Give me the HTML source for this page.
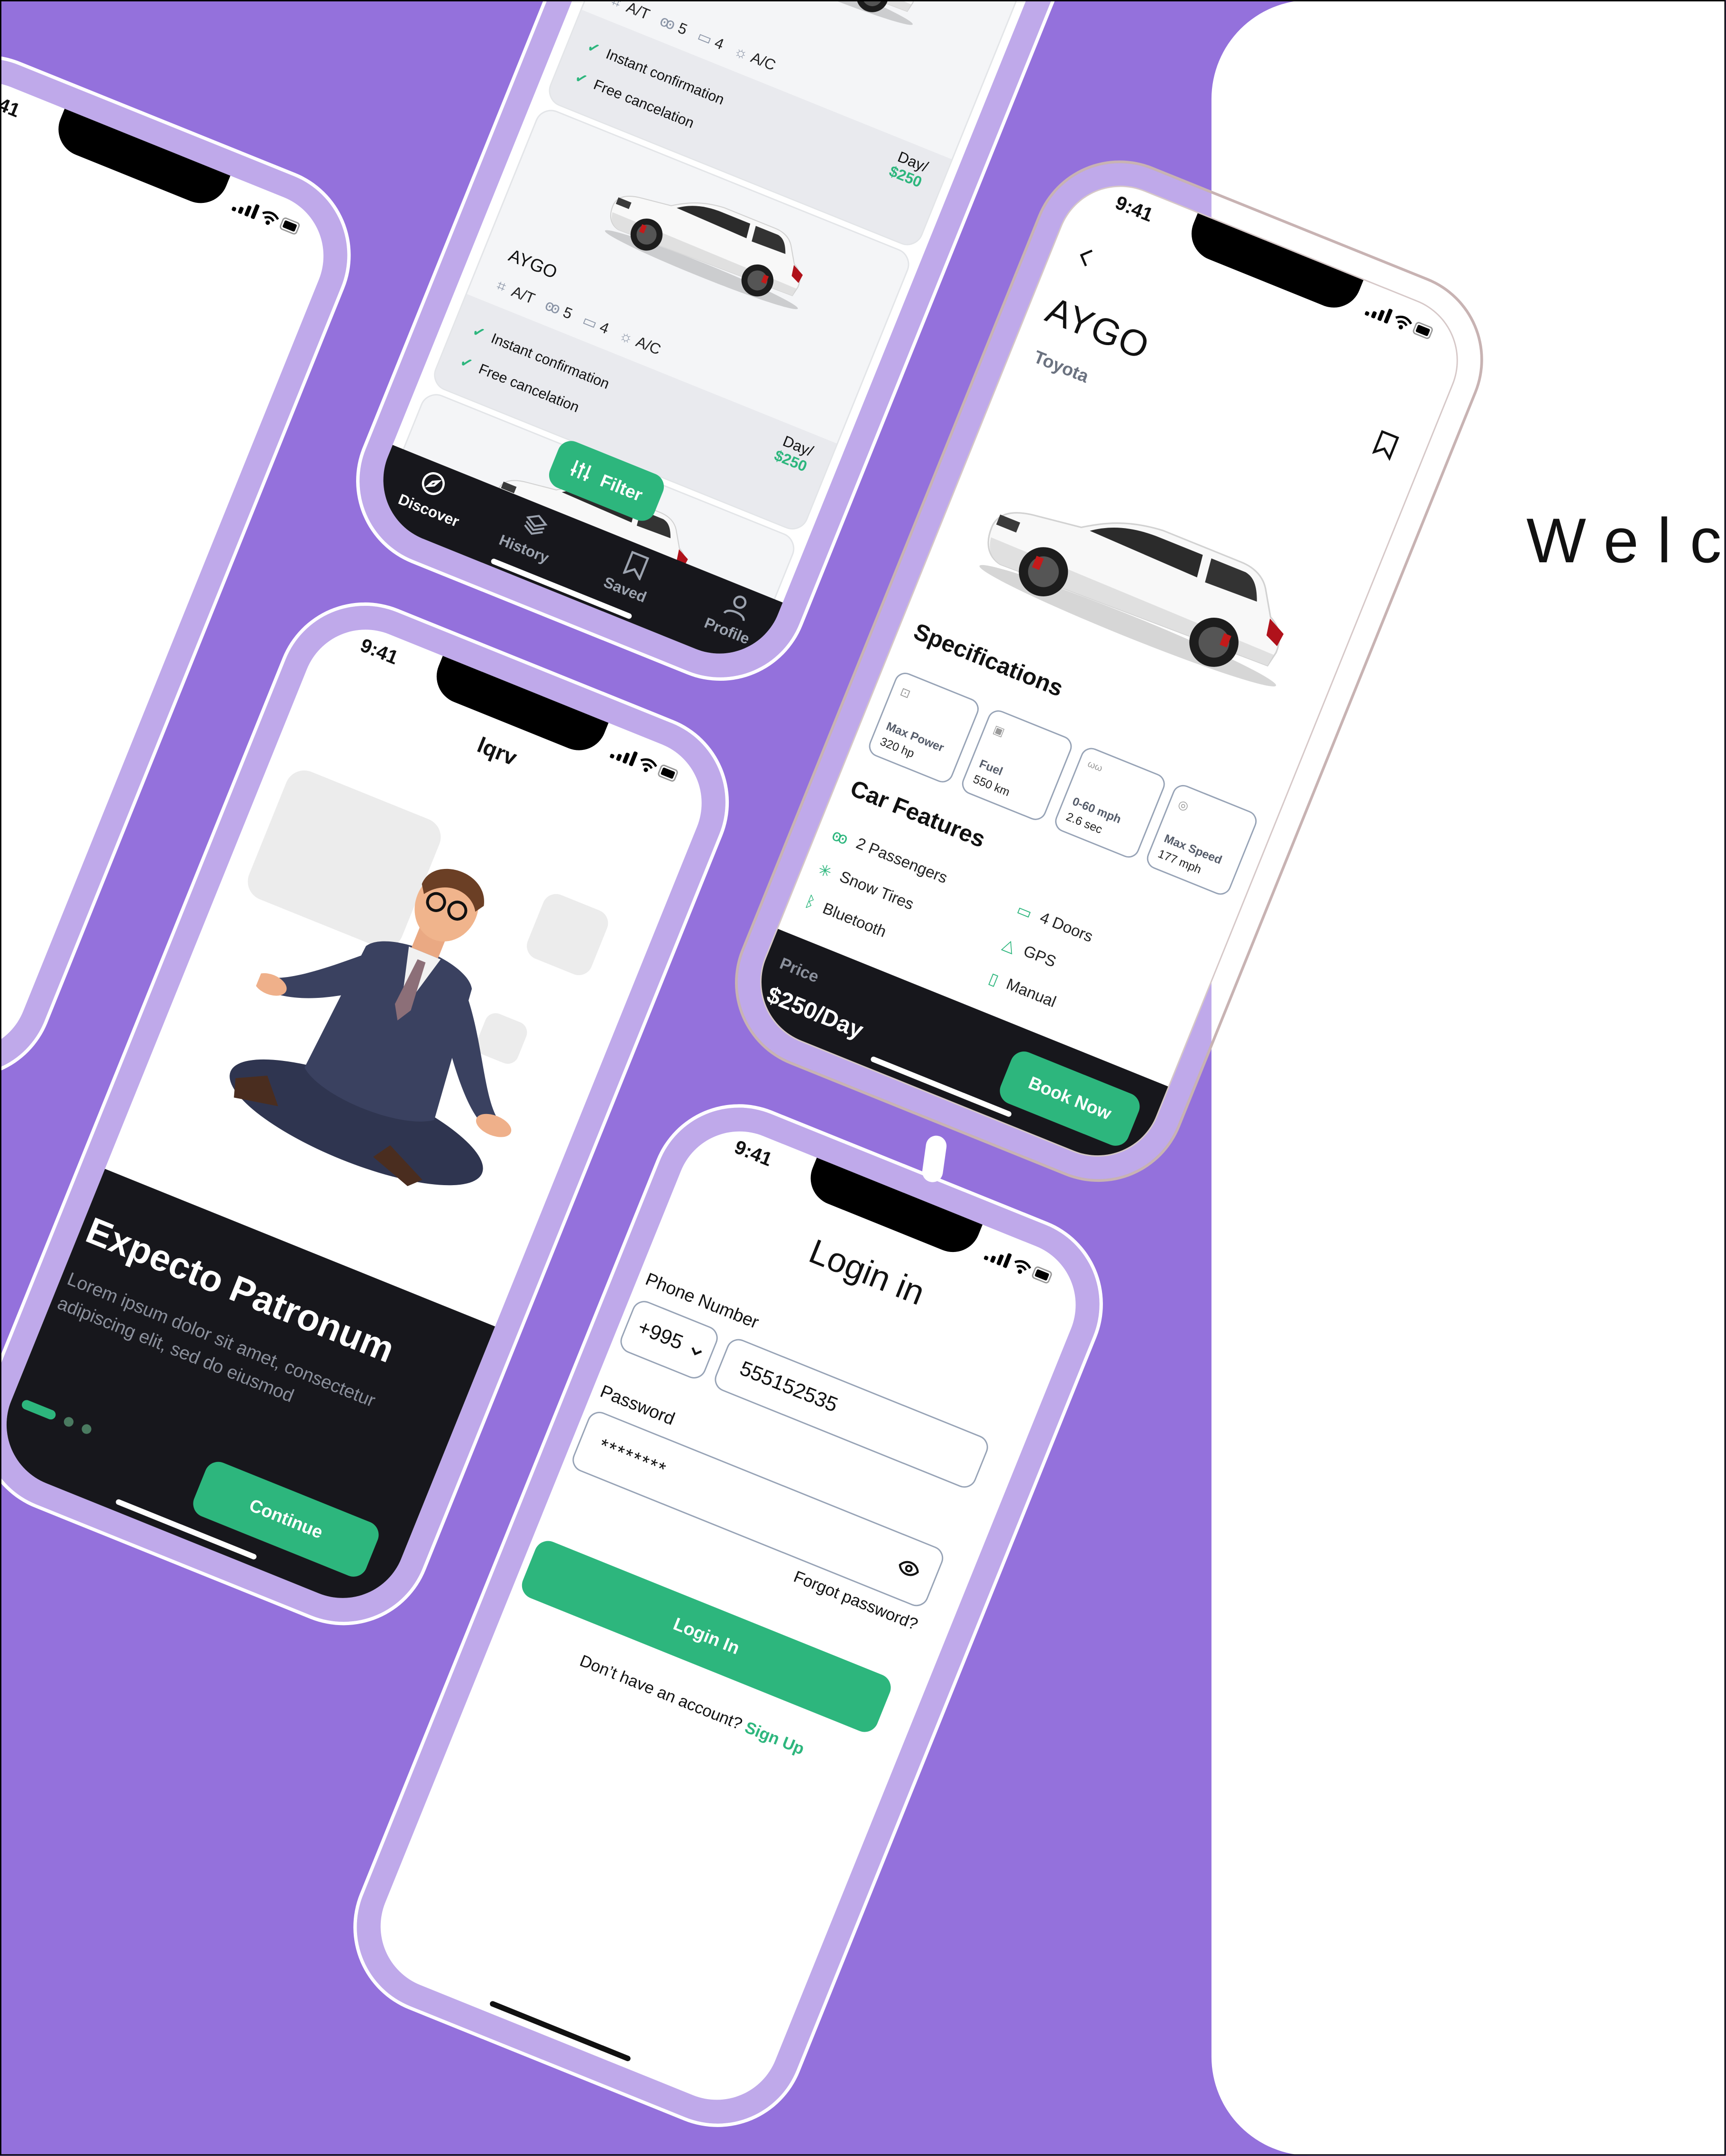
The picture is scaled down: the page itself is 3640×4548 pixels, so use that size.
<!DOCTYPE html>
<html><head><meta charset="utf-8">
<style>
html,body{margin:0;padding:0}
body{width:3640px;height:4548px;overflow:hidden;background:#9471dc;position:relative}
#s{position:absolute;left:0;top:0;width:1255px;height:1568px;transform:scale(2.9);transform-origin:0 0;overflow:hidden;background:#9471dc;font-family:"Liberation Sans",sans-serif;color:#111}
#bd{position:absolute;left:0;top:0;right:0;bottom:0;border:1.3px solid #000;z-index:50;pointer-events:none}
.panel{position:absolute;left:881px;top:0;width:420px;height:1568px;background:#fff;border-radius:72px 0 0 72px}
.welc{position:absolute;left:1110px;top:366px;font-size:46px;letter-spacing:13.5px;white-space:nowrap;color:#111}
.ph{position:absolute;left:0;top:0;width:340px;height:700px;transform-origin:0 0;border-radius:62px;background:rgba(255,255,255,.4);box-shadow:0 0 0 2.5px #fff}
.sc{position:absolute;left:17px;top:17px;width:306px;height:666px;border-radius:46px;background:#fff;overflow:hidden}
.a{position:absolute;white-space:nowrap}
.notch{position:absolute;left:88px;top:-2px;width:130px;height:30px;background:#000;border-radius:0 0 20px 20px}
.time{position:absolute;left:30px;top:6px;font-size:14px;font-weight:700}
.st{position:absolute;left:228px;top:12px}
.hi{position:absolute;left:98px;top:657px;width:110px;height:4px;border-radius:2px;background:#fff}
.green{background:#2db67d;color:#fff}
.card{position:absolute;left:8px;width:290px;height:217px;border-radius:12px;background:#f4f5f7;border:1px solid #e3e5e8;overflow:hidden}
.card .low{position:absolute;left:0;right:0;top:147px;bottom:0;background:#e9eaee}
.spec{position:absolute;top:389px;width:63px;height:63px;border:1.5px solid #97a3b6;border-radius:8px;font-size:8.5px}
.spec b{position:absolute;left:6px;top:35px;color:#555c6a;font-weight:700}
.spec i{position:absolute;left:6px;top:47px;font-style:normal;color:#222}
.feat{position:absolute;font-size:11.5px;color:#222;display:flex;align-items:center;gap:7px}
.box{position:absolute;border:1.5px solid #97a3b6;border-radius:9px}
</style></head><body>
<div id="s">
<svg width="0" height="0" style="position:absolute">
<defs>
<symbol id="car" viewBox="0 0 220 100">
<ellipse cx="112" cy="86" rx="104" ry="7" fill="rgba(0,0,0,.16)"/>
<path d="M6,60 C6,50 14,44 30,42 L60,38 C72,30 86,22 110,20 L165,20 C175,20 182,24 186,30 L196,46 C204,50 208,56 208,66 L206,76 L20,80 C10,78 6,70 6,60Z" fill="#f8f8f8" stroke="#d2d2d2" stroke-width="1"/>
<path d="M8,66 L207,68 L206,76 L20,80 C12,78 9,73 8,66Z" fill="#e0e0e0"/>
<path d="M66,38 C78,29 92,25 110,25 L140,25 L142,40 Z" fill="#2b2b2b"/>
<path d="M146,25 L170,25 C176,26 180,30 184,40 L148,41 Z" fill="#333"/>
<path d="M196,47 L208,53 L207,62 L198,58 Z" fill="#b0121b"/>
<rect x="8" y="50" width="14" height="7" fill="#3a3a3a"/>
<circle cx="48" cy="74" r="16" fill="#1d1d1d"/><circle cx="48" cy="74" r="10" fill="#555"/><rect x="40" y="66" width="5" height="8" fill="#c41a1a"/>
<circle cx="168" cy="75" r="16" fill="#1d1d1d"/><circle cx="168" cy="75" r="10" fill="#555"/><rect x="172" y="67" width="5" height="8" fill="#c41a1a"/>
</symbol>
<symbol id="stat" viewBox="0 0 52 12">
<rect x="0" y="8" width="3" height="3" rx="1"/><rect x="5" y="6" width="3" height="5" rx="1"/><rect x="10" y="3" width="3" height="8" rx="1"/><rect x="15" y="0" width="3" height="11" rx="1"/>
<path d="M22 4.5 Q28 -0.5 34 4.5 M24.5 7 Q28 4 31.5 7" stroke="#000" stroke-width="1.7" fill="none"/><circle cx="28" cy="9.5" r="1.6"/>
<rect x="37.5" y="1.5" width="12.5" height="8.5" rx="2" fill="none" stroke="#999"/><rect x="39" y="3" width="9.5" height="5.5" rx="1"/>
</symbol>
</defs>
</svg>

<div class="panel"></div>
<div class="welc">Welcome</div>

<!-- LEFT PHONE -->
<div class="ph" style="transform:translate(-44px,24px) rotate(22deg)">
<div class="sc"><div class="notch"></div><div class="time">9:41</div><svg class="st" width="52" height="12"><use href="#stat"/></svg></div>
</div>

<!-- LIST PHONE -->
<div class="ph" style="transform:translate(505px,-265px) rotate(22deg)">
<div class="sc" style="background:#fff">
<div class="card" style="top:118px"><div class="low"></div>
<svg class="a" style="left:70px;top:4px" width="160" height="73"><use href="#car"/></svg>
<div class="a" style="left:18px;top:101px;font-size:13px">AYGO</div>
<div class="a" style="left:18px;top:126px;font-size:11px;color:#222"><span style="color:#8a94a6">⌗</span>&nbsp; A/T &nbsp;&nbsp;<span style="color:#8a94a6">ꙭ</span> 5 &nbsp;&nbsp;<span style="color:#8a94a6">▭</span> 4 &nbsp;&nbsp;<span style="color:#8a94a6">☼</span> A/C</div>
<div class="a" style="left:14px;top:164px;font-size:10.5px"><span style="color:#2db67d;font-weight:700">✓</span>&nbsp; Instant confirmation</div>
<div class="a" style="left:14px;top:188px;font-size:10.5px"><span style="color:#2db67d;font-weight:700">✓</span>&nbsp; Free cancelation</div>
<div class="a" style="right:14px;top:154px;font-size:11px;text-align:right">Day/<br><span style="color:#2db67d;font-weight:700">$250</span></div>
</div>
<div class="card" style="top:341px"><div class="low"></div>
<svg class="a" style="left:70px;top:4px" width="160" height="73"><use href="#car"/></svg>
<div class="a" style="left:18px;top:101px;font-size:13px">AYGO</div>
<div class="a" style="left:18px;top:126px;font-size:11px;color:#222"><span style="color:#8a94a6">⌗</span>&nbsp; A/T &nbsp;&nbsp;<span style="color:#8a94a6">ꙭ</span> 5 &nbsp;&nbsp;<span style="color:#8a94a6">▭</span> 4 &nbsp;&nbsp;<span style="color:#8a94a6">☼</span> A/C</div>
<div class="a" style="left:14px;top:164px;font-size:10.5px"><span style="color:#2db67d;font-weight:700">✓</span>&nbsp; Instant confirmation</div>
<div class="a" style="left:14px;top:188px;font-size:10.5px"><span style="color:#2db67d;font-weight:700">✓</span>&nbsp; Free cancelation</div>
<div class="a" style="right:14px;top:154px;font-size:11px;text-align:right">Day/<br><span style="color:#2db67d;font-weight:700">$250</span></div>
</div>
<div class="card" style="top:564px">
<svg class="a" style="left:70px;top:4px" width="160" height="73"><use href="#car"/></svg>
</div>
<div class="a" style="left:0;top:611px;width:306px;height:60px;background:#17171c"></div>
<div class="a green" style="left:113px;top:559px;width:82px;height:36px;border-radius:10px;font-size:13px;font-weight:700;display:flex;align-items:center;justify-content:center;gap:8px">
<svg width="16" height="14" viewBox="0 0 16 14" stroke="#fff" stroke-width="1.6" fill="none"><path d="M3 1V13M8 1V13M13 1V13M1 9H5M6 4H10M11 10H15"/></svg>Filter</div>
<svg class="a" style="left:29px;top:617px" width="18" height="18" viewBox="0 0 18 18" fill="none" stroke="#fff" stroke-width="1.6"><circle cx="9" cy="9" r="7.5"/><path d="M12 6L10 10 6 12 8 8Z"/></svg>
<div class="a" style="left:19px;top:640px;font-size:11px;color:#fff;font-weight:600">Discover</div>
<svg class="a" style="left:109px;top:617px" width="18" height="18" viewBox="0 0 18 18" fill="none" stroke="#9ca3af" stroke-width="1.4"><path d="M9 2L16 6 9 10 2 6Z M2 9L9 13 16 9 M2 12L9 16 16 12"/></svg>
<div class="a" style="left:98px;top:640px;font-size:11px;color:#9ca3af;font-weight:600">History</div>
<svg class="a" style="left:189px;top:617px" width="16" height="18" viewBox="0 0 16 18" fill="none" stroke="#9ca3af" stroke-width="1.6"><path d="M2 1H14V17L8 12 2 17Z"/></svg>
<div class="a" style="left:180px;top:640px;font-size:11px;color:#9ca3af;font-weight:600">Saved</div>
<svg class="a" style="left:268px;top:617px" width="18" height="18" viewBox="0 0 18 18" fill="none" stroke="#9ca3af" stroke-width="1.6"><circle cx="9" cy="5.5" r="4"/><path d="M1.5 17C2 12 16 12 16.5 17"/></svg>
<div class="a" style="left:259px;top:640px;font-size:11px;color:#9ca3af;font-weight:600">Profile</div>
<div class="hi" style="top:660px"></div>
</div>
</div>

<!-- ONBOARDING PHONE -->
<div class="ph" style="transform:translate(231px,422px) rotate(22deg)">
<div class="sc">
<div class="notch"></div><div class="time">9:41</div><svg class="st" width="52" height="12"><use href="#stat"/></svg>
<div class="a" style="left:136px;top:42px;font-size:16px;font-weight:700">lqrv</div>
<div class="a" style="left:17px;top:114px;width:120px;height:100px;border-radius:14px;background:#ececec"></div>
<div class="a" style="left:223px;top:129px;width:50px;height:50px;border-radius:10px;background:#ececec"></div>
<div class="a" style="left:216px;top:226px;width:32px;height:32px;border-radius:8px;background:#ececec"></div>
<svg class="a" style="left:52px;top:118px" width="220" height="270" viewBox="0 0 210 260">
<ellipse cx="100" cy="212" rx="95" ry="28" fill="#2f3550"/>
<path d="M60 95 C70 78 130 78 140 95 L150 190 C130 205 70 205 52 190 Z" fill="#3a4160"/>
<path d="M88 84 L100 130 L112 84 Z" fill="#f1f1f1"/>
<path d="M97 90 L103 90 L106 125 L100 135 L94 125 Z" fill="#8c6f78"/>
<path d="M62 100 C40 120 22 135 8 140 L12 150 C35 148 55 135 70 125 Z" fill="#3a4160"/>
<path d="M138 100 C160 125 175 160 190 172 L182 180 C165 172 145 145 130 125 Z" fill="#3a4160"/>
<ellipse cx="8" cy="145" rx="12" ry="7" fill="#efb08a"/>
<ellipse cx="190" cy="178" rx="13" ry="7" fill="#efb08a"/>
<rect x="90" y="62" width="20" height="22" fill="#eaa983"/>
<ellipse cx="102" cy="48" rx="22" ry="25" fill="#f0b48c"/>
<path d="M80 40 C80 18 120 14 126 38 L122 44 C115 32 95 30 84 46 Z" fill="#6b3f25"/>
<circle cx="94" cy="48" r="6" fill="none" stroke="#111" stroke-width="2"/><circle cx="110" cy="48" r="6" fill="none" stroke="#111" stroke-width="2"/>
<path d="M30 205 L10 215 L14 228 L45 222Z" fill="#4a2d1f"/>
<path d="M120 230 L150 240 L158 232 L128 218Z" fill="#4a2d1f"/>
</svg>
<div class="a" style="left:0;top:438px;width:306px;height:230px;background:#17171c"></div>
<div class="a" style="left:5px;top:468px;font-size:27px;font-weight:700;color:#fff">Expecto Patronum</div>
<div class="a" style="left:5px;top:512px;font-size:13.5px;line-height:19px;color:#8b909c">Lorem ipsum dolor sit amet, consectetur<br>adipiscing elit, sed do eiusmod</div>
<div class="a" style="left:8px;top:615px;width:26px;height:7px;border-radius:4px;background:#2db67d"></div>
<div class="a" style="left:41px;top:615px;width:7px;height:7px;border-radius:4px;background:#4a7a60"></div>
<div class="a" style="left:55px;top:615px;width:7px;height:7px;border-radius:4px;background:#4a7a60"></div>
<div class="a green" style="left:150px;top:604px;width:135px;height:42px;border-radius:10px;font-size:13px;font-weight:700;text-align:center;line-height:42px">Continue</div>
<div class="hi"></div>
</div>
</div>

<!-- DETAIL PHONE -->
<div class="ph" style="transform:translate(780px,100px) rotate(22deg);box-shadow:0 0 0 2px #c8b3b3">
<div class="sc" style="box-shadow:0 0 0 1px #d6c8c8">
<div class="notch"></div><div class="time">9:41</div><svg class="st" width="52" height="12"><use href="#stat"/></svg>
<svg class="a" style="left:18px;top:52px" width="12" height="16" viewBox="0 0 12 16" fill="none" stroke="#111" stroke-width="1.6"><path d="M9 2L3 8 9 14"/></svg>
<div class="a" style="left:13px;top:90px;font-size:27px;font-weight:500;letter-spacing:.5px">AYGO</div>
<div class="a" style="left:17px;top:133px;font-size:13px;color:#6b7280;font-weight:700">Toyota</div>
<svg class="a" style="left:270px;top:96px" width="16" height="19" viewBox="0 0 16 19" fill="none" stroke="#111" stroke-width="1.7"><path d="M2 1H14V17L8 12 2 17Z"/></svg>
<svg class="a" style="left:28px;top:200px" width="246" height="114"><use href="#car"/></svg>
<div class="a" style="left:11px;top:349px;font-size:17px;font-weight:700">Specifications</div>
<div class="spec" style="left:11px"><span class="a" style="left:6px;top:8px;color:#999">⊡</span><b>Max Power</b><i>320 hp</i></div>
<div class="spec" style="left:84px"><span class="a" style="left:6px;top:8px;color:#999">▣</span><b>Fuel</b><i>550 km</i></div>
<div class="spec" style="left:157px"><span class="a" style="left:6px;top:8px;color:#999;font-size:7px">ωω</span><b>0-60 mph</b><i>2.6 sec</i></div>
<div class="spec" style="left:229px"><span class="a" style="left:6px;top:8px;color:#999">◎</span><b>Max Speed</b><i>177 mph</i></div>
<div class="a" style="left:11px;top:472px;font-size:17px;font-weight:700">Car Features</div>
<div class="feat" style="left:11px;top:511px"><span style="color:#2db67d">ꙭ</span>2 Passengers</div>
<div class="feat" style="left:11px;top:538px"><span style="color:#2db67d">✳</span>Snow Tires</div>
<div class="feat" style="left:11px;top:565px"><span style="color:#2db67d">ᛒ</span>Bluetooth</div>
<div class="feat" style="left:156px;top:511px"><span style="color:#2db67d">▭</span>4 Doors</div>
<div class="feat" style="left:156px;top:538px"><span style="color:#2db67d">△</span>GPS</div>
<div class="feat" style="left:156px;top:565px"><span style="color:#2db67d">▯</span>Manual</div>
<div class="a" style="left:0;top:597px;width:306px;height:80px;background:#17171c"></div>
<div class="a" style="left:11px;top:612px;font-size:12px;color:#8b909c;font-weight:600">Price</div>
<div class="a" style="left:11px;top:634px;font-size:17px;color:#fff;font-weight:700">$250/Day</div>
<div class="a green" style="left:193px;top:612px;width:100px;height:40px;border-radius:10px;font-size:13px;font-weight:700;text-align:center;line-height:40px">Book Now</div>
<div class="hi"></div>
</div>
</div>

<div class="a" style="left:672px;top:826px;width:15px;height:34px;border-radius:8px;background:#fff;transform:rotate(8deg)"></div>

<!-- LOGIN PHONE -->
<div class="ph" style="transform:translate(503px,787px) rotate(22deg)">
<div class="sc">
<div class="notch"></div><div class="time">9:41</div><svg class="st" width="52" height="12"><use href="#stat"/></svg>
<div class="a" style="left:0;width:306px;text-align:center;top:50px;font-size:25px;font-weight:500">Login in</div>
<div class="a" style="left:6px;top:120px;font-size:13px">Phone Number</div>
<div class="box" style="left:5px;top:143px;width:64px;height:38px"><span class="a" style="left:8px;top:10px;font-size:15px">+995</span><svg class="a" style="left:49px;top:17px" width="9" height="6" viewBox="0 0 9 6" fill="none" stroke="#111" stroke-width="1.6"><path d="M1 1L4.5 4.5 8 1"/></svg></div>
<div class="box" style="left:79px;top:143px;width:202px;height:38px"><span class="a" style="left:14px;top:10px;font-size:15px">555152535</span></div>
<div class="a" style="left:6px;top:208px;font-size:13px">Password</div>
<div class="box" style="left:5px;top:230px;width:276px;height:44px"><span class="a" style="left:14px;top:13px;font-size:14px;letter-spacing:1px">********</span>
<svg class="a" style="left:248px;top:15px" width="16" height="12" viewBox="0 0 16 12" fill="none" stroke="#111" stroke-width="1.5"><path d="M1 6C4 0 12 0 15 6C12 12 4 12 1 6Z"/><circle cx="8" cy="6" r="2"/></svg></div>
<div class="a" style="right:23px;top:281px;font-size:12px">Forgot password?</div>
<div class="a green" style="left:5px;top:331px;width:278px;height:44px;border-radius:10px;font-size:13px;font-weight:700;text-align:center;line-height:44px">Login In</div>
<div class="a" style="left:0;width:306px;text-align:center;top:396px;font-size:12px">Don’t have an account? <span style="color:#2db67d;font-weight:700">Sign Up</span></div>
<div class="hi" style="background:#111"></div>
</div>
</div>

<div id="bd"></div>
</div>
</body></html>
